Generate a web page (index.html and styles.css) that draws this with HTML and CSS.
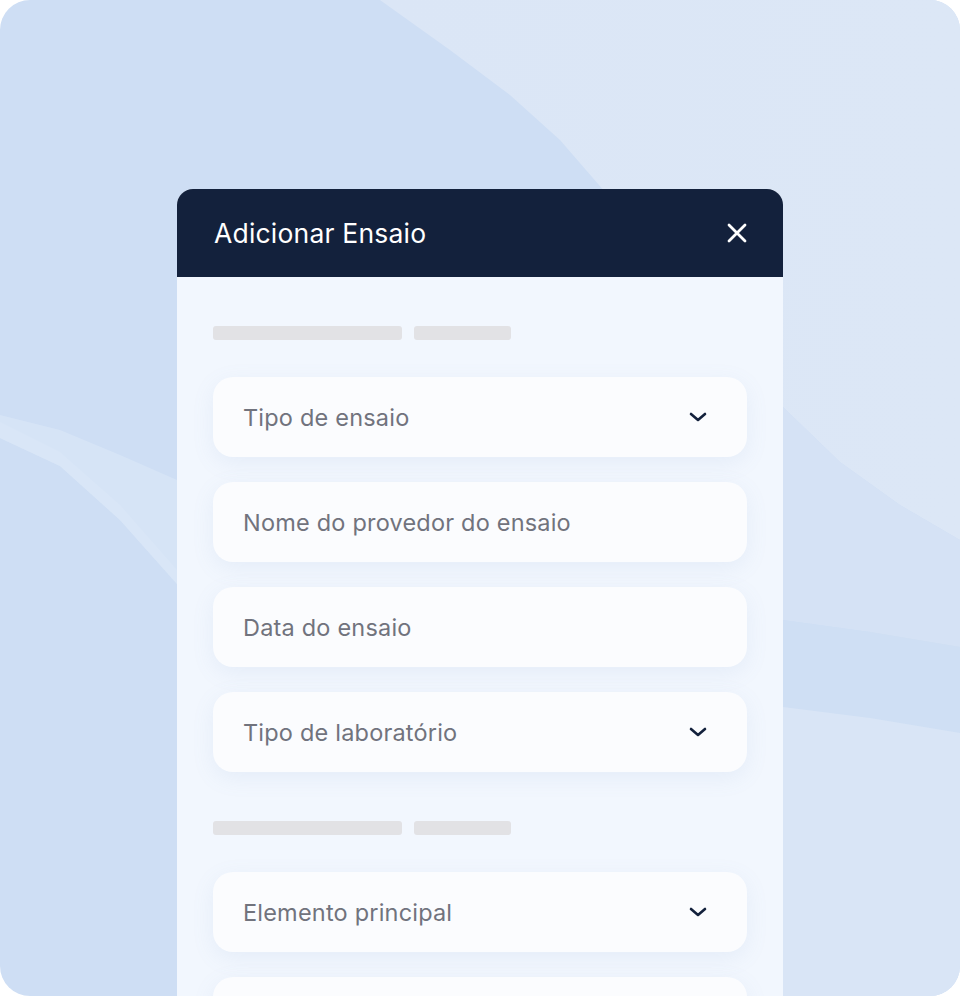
FILE: index.html
```html
<!DOCTYPE html>
<html lang="pt">
<head>
    <meta charset="UTF-8">
    <meta name="viewport" content="width=device-width, initial-scale=1.0">
    <title>Adicionar Ensaio</title>
    <link rel="stylesheet" href="styles.css">
</head>
<body>
    <div class="frame">
        <!-- background curves -->
        <div class="wave wave-top"></div>
        <div class="wave wave-mid"></div>
        <div class="wave wave-band"></div>
        <div class="wave wave-bottom"></div>
        <div class="wave wave-left"></div>
        <div class="wave wave-streak"></div>

        <div class="modal">
            <div class="modal-header">
                <h2>Adicionar Ensaio</h2>
                <svg class="close" width="20" height="20" viewBox="0 0 20 20">
                    <path d="M2 2 L18 18 M18 2 L2 18" stroke="#fff" stroke-width="2.8" stroke-linecap="round"/>
                </svg>
            </div>
            <div class="modal-body">
                <div class="skeleton">
                    <span class="bar long"></span>
                    <span class="bar short"></span>
                </div>
                <div class="fields">
                    <div class="field">
                        <span>Tipo de ensaio</span>
                        <svg class="chevron" width="18" height="12" viewBox="0 0 18 12"><path d="M2 3 L9 9 L16 3" fill="none" stroke="#13213c" stroke-width="2.6" stroke-linecap="round" stroke-linejoin="round"/></svg>
                    </div>
                    <div class="field"><span>Nome do provedor do ensaio</span></div>
                    <div class="field"><span>Data do ensaio</span></div>
                    <div class="field">
                        <span>Tipo de laboratório</span>
                        <svg class="chevron" width="18" height="12" viewBox="0 0 18 12"><path d="M2 3 L9 9 L16 3" fill="none" stroke="#13213c" stroke-width="2.6" stroke-linecap="round" stroke-linejoin="round"/></svg>
                    </div>
                </div>

                <div class="skeleton second">
                    <span class="bar long"></span>
                    <span class="bar short"></span>
                </div>
                <div class="fields">
                    <div class="field">
                        <span>Elemento principal</span>
                        <svg class="chevron" width="18" height="12" viewBox="0 0 18 12"><path d="M2 3 L9 9 L16 3" fill="none" stroke="#13213c" stroke-width="2.6" stroke-linecap="round" stroke-linejoin="round"/></svg>
                    </div>
                    <div class="field"><span></span></div>
                </div>
            </div>
        </div>
    </div>
</body>
</html>
```

FILE: styles.css
```css
body {
    margin: 0;
    background-color: #ffffff;
    font-family: Inter, "Noto Sans", sans-serif;
}
.frame {
    position: relative;
    width: 960px;
    height: 996px;
    border-radius: 30px;
    overflow: hidden;
    background-color: #cedef4;
}
/* soft background curves */
.wave {
    position: absolute;
    left: 0;
    top: 0;
    width: 960px;
    height: 996px;
}
.wave-top {
    background: linear-gradient(90deg, #d7e4f6 0%, #dbe6f6 40%, #dce7f6 100%);
    clip-path: polygon(380px 0, 960px 0, 960px 540px, 900px 505px, 840px 462px, 783px 407px, 700px 305px, 650px 245px, 612px 200px, 560px 140px, 510px 95px, 450px 50px);
}
.wave-mid {
    background-color: #d5e2f5;
    clip-path: polygon(783px 407px, 840px 462px, 900px 505px, 960px 540px, 960px 647px, 870px 632px, 783px 620px);
}
.wave-band {
    background-color: #cfdff4;
    clip-path: polygon(783px 620px, 870px 632px, 960px 647px, 960px 733px, 870px 718px, 783px 707px);
}
.wave-bottom {
    background-color: #d9e5f6;
    clip-path: polygon(783px 707px, 870px 718px, 960px 733px, 960px 996px, 783px 996px);
}
.wave-left {
    background-color: #d6e4f6;
    clip-path: polygon(0 438px, 60px 466px, 120px 520px, 177px 584px, 177px 480px, 120px 455px, 60px 430px, 0 415px);
}
.wave-streak {
    background-color: #d9e6f7;
    clip-path: polygon(0 422px, 60px 452px, 120px 505px, 177px 570px, 177px 584px, 120px 520px, 60px 466px, 0 438px);
}
.modal {
    position: relative;
    margin: 189px 0 0 177px;
    width: 606px;
    height: 820px;
    border-radius: 16px 16px 0 0;
    overflow: hidden;
    background-color: #f2f7fe;
}
.modal-header {
    height: 88px;
    padding: 0 37px;
    background-color: #13213c;
    display: flex;
    align-items: center;
    justify-content: space-between;
}
.modal-header h2 {
    margin: 0;
    color: #ffffff;
    font-size: 26.5px;
    font-weight: 400;
    letter-spacing: 0.2px;
}
.close {
    margin-right: -1px;
}
.modal-body {
    padding: 49px 36px 0 36px;
}
.skeleton {
    display: flex;
    gap: 12px;
    margin-bottom: 37px;
}
.skeleton.second {
    margin-top: 49px;
}
.bar {
    height: 14px;
    border-radius: 3px;
    background-color: #e2e2e5;
}
.bar.long {
    width: 189px;
}
.bar.short {
    width: 97px;
}
.fields {
    display: flex;
    flex-direction: column;
    gap: 25px;
}
.field {
    height: 80px;
    width: 534px;
    box-sizing: border-box;
    padding: 0 40px 0 30px;
    display: flex;
    align-items: center;
    justify-content: space-between;
    background-color: #fbfcfe;
    border-radius: 20px;
    box-shadow: 0 6px 22px rgba(120, 150, 200, 0.10);
    color: #71737d;
    font-size: 23.5px;
    letter-spacing: 0.2px;
}
```
